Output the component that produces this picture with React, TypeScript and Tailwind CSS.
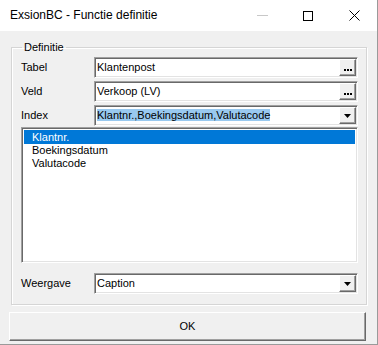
const sunken =
  "border border-t-[#a0a0a0] border-l-[#a0a0a0] border-b-white border-r-white shadow-[inset_1px_1px_0_#696969,inset_-1px_-1px_0_#e3e3e3]";
const raised =
  "border border-t-white border-l-white border-b-[#696969] border-r-[#696969] shadow-[inset_-1px_-1px_0_#a0a0a0] bg-[#f0f0f0]";

const DotsButton = () => (
  <div className={`${raised} w-[17px] h-[17px] flex items-end justify-center pb-[4px] gap-[1px]`}>
    <span className="w-[2px] h-[2px] bg-black" />
    <span className="w-[2px] h-[2px] bg-black" />
    <span className="w-[2px] h-[2px] bg-black" />
  </div>
);

const ArrowButton = () => (
  <div className={`${raised} w-[17px] h-[17px] flex items-center justify-center`}>
    <svg width="7" height="4" viewBox="0 0 7 4">
      <path d="M0 0h7L3.5 4z" fill="#000" />
    </svg>
  </div>
);

const Field = ({
  label,
  children,
  button,
}: {
  label: string;
  children: React.ReactNode;
  button: React.ReactNode;
}) => (
  <div className="flex items-center h-[21px]">
    <div className="w-[82px] pl-[9px]">{label}</div>
    <div className={`${sunken} bg-white w-[264px] h-[21px] flex items-center justify-between pl-[2px] pr-[1px]`}>
      <div className="flex-1 truncate">{children}</div>
      {button}
    </div>
  </div>
);

export default function App() {
  return (
    <div
      className="w-[378px] h-[345px] bg-[#f0f0f0] border-r border-b border-[#9a9a9a] flex flex-col text-[11px] text-black leading-[13px]"
      style={{ fontFamily: '"Liberation Sans", Arial, sans-serif' }}
    >
      {/* titelbalk */}
      <div className="h-[31px] bg-white flex items-center shrink-0">
        <div className="pl-[10px] text-[12px] flex-1">ExsionBC - Functie definitie</div>
        <div className="flex items-center h-full">
          <div className="w-[46px] h-full flex items-center justify-center">
            <span className="w-[11px] h-px bg-[#c8c8c8]" />
          </div>
          <div className="w-[46px] h-full flex items-center justify-center">
            <span className="w-[10px] h-[10px] border border-black" />
          </div>
          <div className="w-[46px] h-full flex items-center justify-center">
            <svg width="11" height="11" viewBox="0 0 11 11">
              <path d="M0.5 0.5l10 10M10.5 0.5l-10 10" stroke="#000" strokeWidth="1" />
            </svg>
          </div>
        </div>
      </div>

      <div className="pl-[11px] pr-[10px] pt-[9px] flex flex-col">
        <fieldset className="border border-[#d5d5d5] shadow-[1px_1px_0_white,inset_1px_1px_0_white] h-[265px] flex flex-col">
          <legend className="ml-[10px] px-[2px] text-[11px] leading-[14px]">Definitie</legend>
          <div className="flex flex-col gap-[3px] pt-[3px]">
            <Field label="Tabel" button={<DotsButton />}>
              Klantenpost
            </Field>
            <Field label="Veld" button={<DotsButton />}>
              Verkoop (LV)
            </Field>
            <Field label="Index" button={<ArrowButton />}>
              <span className="bg-[#99c9ef]">Klantnr.,Boekingsdatum,Valutacode</span>
            </Field>
          </div>
          <div className={`${sunken} bg-white ml-[9px] mt-[1px] w-[337px] h-[136px] p-[2px] flex flex-col`}>
            <div className="h-[14px] bg-[#0078d7] text-white pl-[8px] flex items-center">Klantnr.</div>
            <div className="h-[13px] pl-[8px] flex items-center">Boekingsdatum</div>
            <div className="h-[13px] pl-[8px] flex items-center">Valutacode</div>
          </div>
          <div className="mt-[10px]">
            <Field label="Weergave" button={<ArrowButton />}>
              Caption
            </Field>
          </div>
        </fieldset>

        <button className="mt-[7px] -ml-[2px] w-[357px] h-[29px] border border-t-white border-l-white border-b-[#696969] border-r-[#696969] shadow-[inset_-1px_-1px_0_#a0a0a0] bg-[#f0f0f0] text-[11px]">
          OK
        </button>
      </div>
    </div>
  );
}
